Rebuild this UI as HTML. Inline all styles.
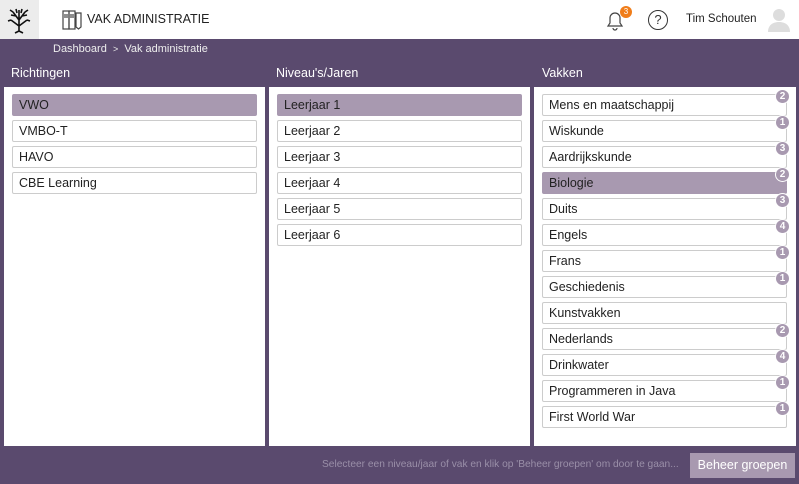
<!DOCTYPE html>
<html><head><meta charset="utf-8"><style>
*{box-sizing:border-box;margin:0;padding:0}
body{width:799px;height:484px;overflow:hidden;font-family:"Liberation Sans",sans-serif;background:#5a4a6e;position:relative}
.hdr{position:absolute;left:0;top:0;width:799px;height:39px;background:#fff}
.logo{position:absolute;left:0;top:0;width:39px;height:39px;background:#ececec}
.title{position:absolute;left:87px;top:12px;font-size:12.5px;color:#222}
.crumb{position:absolute;left:53px;top:43px;font-size:11px;color:#eee}
.ht{position:absolute;top:66px;font-size:12.5px;color:#fff}
.panel{position:absolute;top:87px;height:359px;background:#fff}
.it{position:absolute;height:22px;border:1px solid #ccc;border-radius:2px;font-size:12.5px;color:#222;padding:3px 0 0 6px;background:#fff}
.it.s{background:#a899b0;border-color:#a899b0}
.b{position:absolute;width:15px;height:15px;border-radius:8px;background:#a899b0;border:1px solid #fff;color:#fff;font-size:10px;font-weight:bold;text-align:center;line-height:13px}
.foot{position:absolute;left:322px;top:459px;font-size:10.2px;color:#9a8fa8;white-space:nowrap}
.btn{position:absolute;left:690px;top:453px;width:105px;height:25px;background:#a899b0;color:#fff;font-size:12.5px;text-align:center;line-height:25px}
</style></head><body>
<div class="hdr">
<div class="logo"><svg width="39" height="39" viewBox="0 0 39 39"><g stroke="#111" stroke-width="1.6" fill="none"><path d="M19 31V10M19 20l-6-8M19 20l6-8M19 26l-8-6M19 26l8-6M13 12l-3-2M25 12l3-2M11 20l-3 1M27 20l3 1M16 16l-5-1M22 16l5-1M19 31l-4 2M19 31l4 2M16 9l1 4M22 9l-1 4"/></g></svg></div>
<svg style="position:absolute;left:62px;top:10px" width="22" height="20" viewBox="0 0 22 20"><g stroke="#444" stroke-width="1.2" fill="none"><rect x="1" y="1" width="6" height="18"/><rect x="7" y="1" width="6" height="18"/><path d="M14 3h5v14l-2.5 2-2.5-2z"/><path d="M3 4v4M5 4v4M9 4v4M11 4v4"/></g></svg>
<div class="title">VAK ADMINISTRATIE</div>
<svg style="position:absolute;left:604px;top:9px" width="22" height="22" viewBox="0 0 22 22"><path d="M4 17h14l-2-3V9a5 5 0 0 0-10 0v5z M9 19a2 2 0 0 0 4 0" stroke="#444" stroke-width="1.2" fill="none"/></svg>
<div style="position:absolute;left:620px;top:6px;width:12px;height:12px;border-radius:6px;background:#f07d1a;color:#fff;font-size:8px;text-align:center;line-height:12px">3</div>
<div style="position:absolute;left:648px;top:10px;width:20px;height:20px;border:1.5px solid #333;border-radius:50%;font-size:13px;text-align:center;line-height:18px;color:#333">?</div>
<div style="position:absolute;left:686px;top:13px;font-size:11.5px;color:#222">Tim Schouten</div>
<svg style="position:absolute;left:767px;top:7px" width="24" height="25" viewBox="0 0 24 25"><circle cx="12" cy="8" r="6" fill="#ddd"/><path d="M1 25c0-7 5-10 11-10s11 3 11 10z" fill="#ddd"/></svg>
</div>
<div class="crumb">Dashboard &nbsp;<span style="font-size:9px">&gt;</span>&nbsp; Vak administratie</div>
<div class="ht" style="left:11px">Richtingen</div>
<div class="ht" style="left:276px">Niveau's/Jaren</div>
<div class="ht" style="left:542px">Vakken</div>
<div class="panel" style="left:4px;width:261px"></div>
<div class="panel" style="left:269px;width:261px"></div>
<div class="panel" style="left:534px;width:262px"></div>

<div class="it s" style="left:12px;top:94px;width:245px">VWO</div>
<div class="it" style="left:12px;top:120px;width:245px">VMBO-T</div>
<div class="it" style="left:12px;top:146px;width:245px">HAVO</div>
<div class="it" style="left:12px;top:172px;width:245px">CBE Learning</div>

<div class="it s" style="left:277px;top:94px;width:245px">Leerjaar 1</div>
<div class="it" style="left:277px;top:120px;width:245px">Leerjaar 2</div>
<div class="it" style="left:277px;top:146px;width:245px">Leerjaar 3</div>
<div class="it" style="left:277px;top:172px;width:245px">Leerjaar 4</div>
<div class="it" style="left:277px;top:198px;width:245px">Leerjaar 5</div>
<div class="it" style="left:277px;top:224px;width:245px">Leerjaar 6</div>

<div class="it" style="left:542px;top:94px;width:245px">Mens en maatschappij</div>
<div class="it" style="left:542px;top:120px;width:245px">Wiskunde</div>
<div class="it" style="left:542px;top:146px;width:245px">Aardrijkskunde</div>
<div class="it s" style="left:542px;top:172px;width:245px">Biologie</div>
<div class="it" style="left:542px;top:198px;width:245px">Duits</div>
<div class="it" style="left:542px;top:224px;width:245px">Engels</div>
<div class="it" style="left:542px;top:250px;width:245px">Frans</div>
<div class="it" style="left:542px;top:276px;width:245px">Geschiedenis</div>
<div class="it" style="left:542px;top:302px;width:245px">Kunstvakken</div>
<div class="it" style="left:542px;top:328px;width:245px">Nederlands</div>
<div class="it" style="left:542px;top:354px;width:245px">Drinkwater</div>
<div class="it" style="left:542px;top:380px;width:245px">Programmeren in Java</div>
<div class="it" style="left:542px;top:406px;width:245px">First World War</div>

<div class="b" style="left:775px;top:89px">2</div>
<div class="b" style="left:775px;top:115px">1</div>
<div class="b" style="left:775px;top:141px">3</div>
<div class="b" style="left:775px;top:167px">2</div>
<div class="b" style="left:775px;top:193px">3</div>
<div class="b" style="left:775px;top:219px">4</div>
<div class="b" style="left:775px;top:245px">1</div>
<div class="b" style="left:775px;top:271px">1</div>
<div class="b" style="left:775px;top:323px">2</div>
<div class="b" style="left:775px;top:349px">4</div>
<div class="b" style="left:775px;top:375px">1</div>
<div class="b" style="left:775px;top:401px">1</div>

<div class="foot">Selecteer een niveau/jaar of vak en klik op 'Beheer groepen' om door te gaan...</div>
<div class="btn">Beheer groepen</div>
</body></html>
